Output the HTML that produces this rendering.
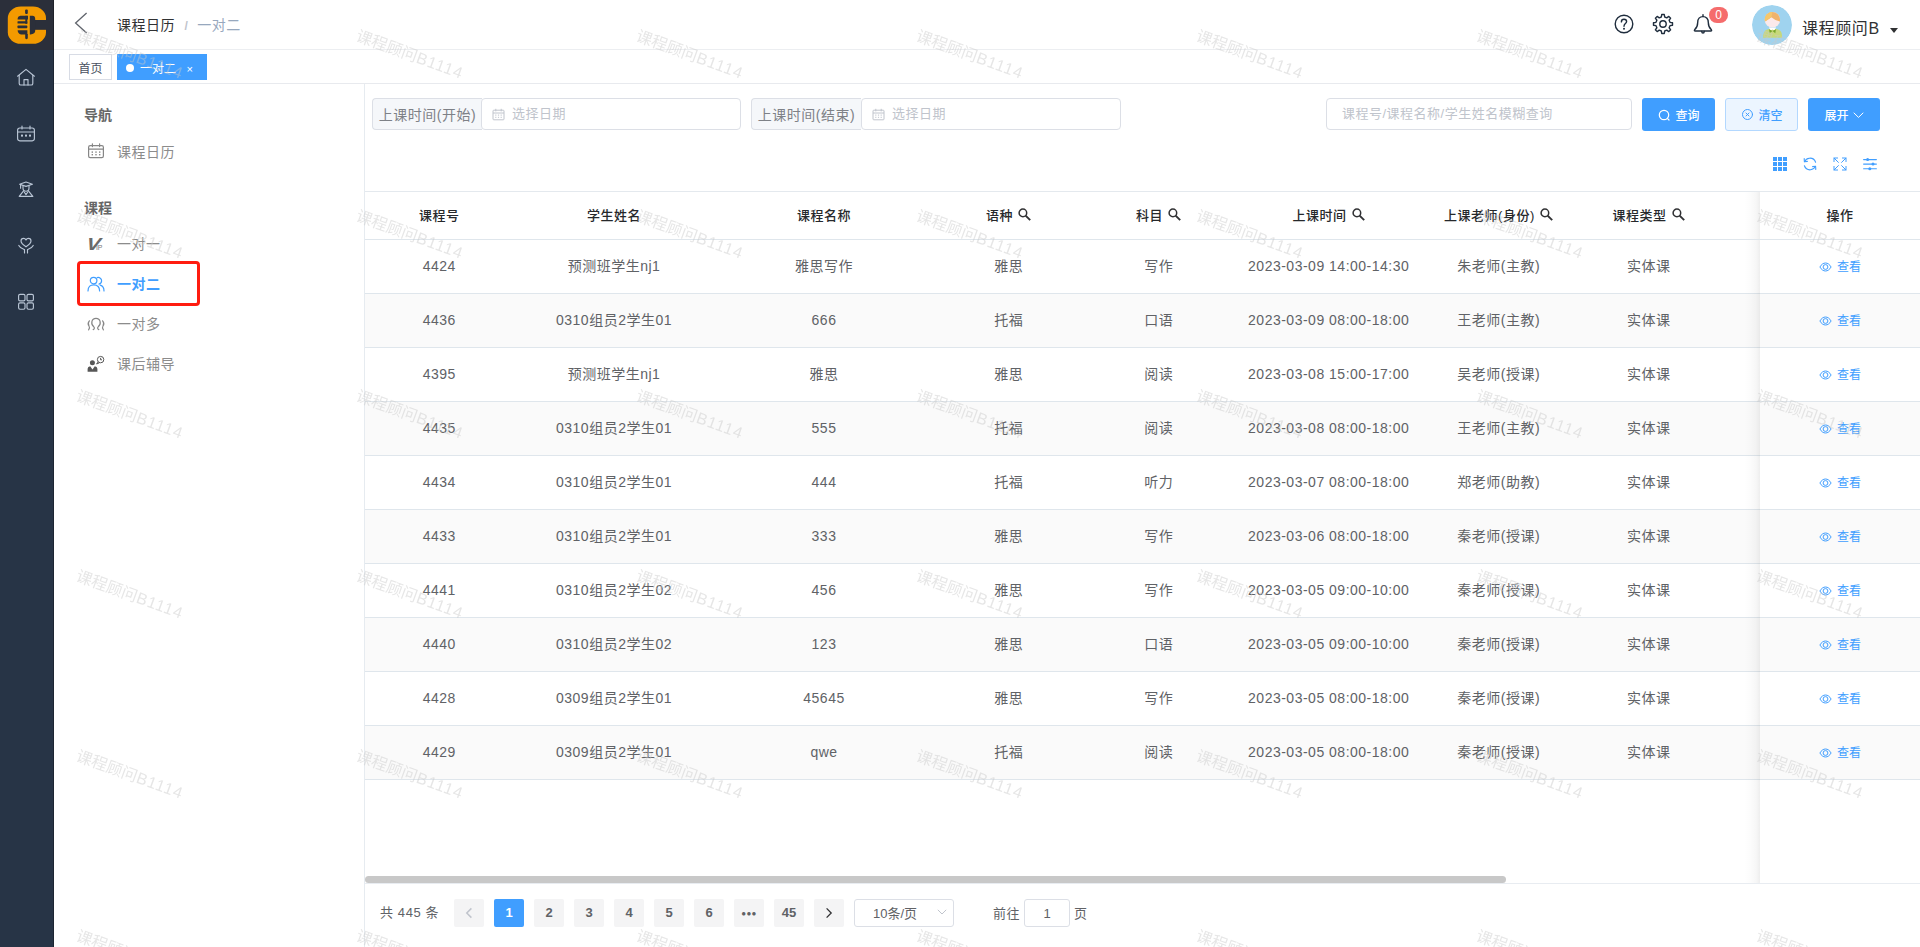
<!DOCTYPE html>
<html lang="zh-CN">
<head>
<meta charset="utf-8">
<title>一对二</title>
<style>
*{box-sizing:border-box;margin:0;padding:0}
html,body{width:1920px;height:947px;overflow:hidden;background:#fff}
body{position:relative;font-family:"Liberation Sans","Noto Sans CJK SC",sans-serif;font-size:14px;color:#606266;letter-spacing:.5px}
svg{display:block}
.side{position:absolute;left:0;top:0;width:54px;height:947px;background:#273446;box-shadow:inset -1px 0 0 rgba(0,0,0,.28)}
.logo{position:absolute;left:0;top:0;width:54px;height:50px;background:#2b2f3a;box-shadow:inset -1px 0 0 rgba(0,0,0,.28)}
.logo svg{position:absolute;left:7px;top:5px}
.sic{position:absolute;left:14px;width:24px;height:24px}
.navbar{position:absolute;left:54px;top:0;width:1866px;height:50px;background:#fff;border-bottom:1px solid #eceef1}
.back{position:absolute;left:20px;top:12px}
.bc{position:absolute;left:63px;top:0;height:50px;line-height:50px;font-size:14px;letter-spacing:.5px;white-space:nowrap}
.bc .b1{color:#303133}
.bc .sep{color:#c0c4cc;margin:0 9px 0 9.5px;font-weight:bold;font-size:12px}
.bc .b2{color:#97a8be}
.hi{position:absolute;top:13px;width:22px;height:22px}
.badge{position:absolute;left:1655px;top:7px;width:19px;height:16px;border-radius:8px;background:#f56c6c;color:#fff;font-size:12px;line-height:16px;text-align:center;letter-spacing:0}
.avatar{position:absolute;left:1698px;top:5px;width:40px;height:40px;border-radius:50%;overflow:hidden}
.uname{position:absolute;left:1748px;top:4px;height:50px;line-height:50px;font-size:16px;color:#303133;letter-spacing:.6px;white-space:nowrap}
.caret{position:absolute;left:1836px;top:28px;width:0;height:0;border:4px solid transparent;border-top:5px solid #303133;border-bottom:0}
.tags{position:absolute;left:54px;top:50px;width:1866px;height:34px;background:#fff;border-bottom:1px solid #e8eaee}
.tag{position:absolute;top:4px;height:26px;line-height:28px;font-size:12px;letter-spacing:0;border:1px solid #d8dce5;color:#495060;background:#fff;white-space:nowrap}
.tag.t1{left:15px;width:43px;text-align:center}
.tag.t2{left:63px;width:90px;background:#409eff;border-color:#409eff;color:#fff}
.tag .dot{position:absolute;left:8px;top:9px;width:8px;height:8px;border-radius:50%;background:#fff}
.tag b{position:absolute;left:22px;top:0;font-weight:normal}
.tag em{position:absolute;left:68.5px;top:0;font-style:normal;font-size:11px}
.lnav{position:absolute;left:54px;top:84px;width:310px;height:863px;background:#fff}
.lt{position:absolute;left:30px;height:20px;line-height:20px;font-size:14px;font-weight:bold;color:#666;letter-spacing:0;top:0;margin-top:-84px}
.li{position:absolute;left:63px;height:20px;line-height:20px;font-size:14px;color:#8c8c8c;letter-spacing:.5px;margin-top:-84px;white-space:nowrap}
.li .ic{position:absolute;left:-31px;top:0;width:20px;height:20px}
.li.act{color:#409eff;font-weight:bold}
.redbox{position:absolute;left:23px;top:177px;width:123px;height:45px;border:3px solid #ff1c10;border-radius:4px}
.vline{position:absolute;left:364px;top:84px;width:1px;height:863px;background:#e6ebf0}
.flabel{position:absolute;top:98px;width:110px;height:32px;line-height:32px;background:#f5f7fa;border:1px solid #dcdfe6;border-right:0;border-radius:4px 0 0 4px;color:#7e8187;font-size:14px;text-align:center;white-space:nowrap}
.finput{position:absolute;top:98px;height:32px;border:1px solid #dcdfe6;border-radius:4px;background:#fff;line-height:30px;font-size:13px;color:#c0c4cc;white-space:nowrap}
.finput svg{position:absolute;left:10px;top:8.5px}
.finput span{position:absolute;left:30px;top:0}
.finput.s span{left:15px}
.btn{position:absolute;top:98px;height:33px;border-radius:3px;font-size:12px;line-height:36px;white-space:nowrap;letter-spacing:0;font-weight:500}
.btn.pri{background:#409eff;color:#fff}
.btn.pla{background:#ecf5ff;border:1px solid #b3d8ff;color:#409eff;line-height:34px}
.btn svg{position:absolute}
.btn span{position:absolute;top:0}
.tool{position:absolute;top:157px;width:14px;height:14px}
.table{position:absolute;left:365px;top:191px;width:1555px;height:692px;border-top:1px solid #e4e9ee;overflow:hidden}
.thead{position:absolute;left:0;top:0;width:100%;height:48px;border-bottom:1px solid #dfe6ec;background:#fff}
.th{position:absolute;top:0;width:200px;height:48px;line-height:47px;text-align:center;font-size:13px;font-weight:500;color:#26282b;white-space:nowrap;margin-left:-1px}
.th span{display:inline-block;vertical-align:top}
.th svg{display:inline-block;vertical-align:top;margin:15.5px 0 0 5.5px}
.tr{position:absolute;left:0;width:100%;height:54px;border-bottom:1px solid #dfe6ec;margin-top:-1px;background:#fff}
.tr.odd,.fr.odd{background:#fafafa}
.td{position:absolute;top:0;width:200px;height:54px;line-height:52px;text-align:center;font-size:14px;color:#606266;white-space:nowrap;margin-left:-1px}
.fixr{position:absolute;left:1760px;top:192px;width:160px;height:691px;background:#fff}
.fshadow{position:absolute;left:1744px;top:192px;width:16px;height:691px;background:linear-gradient(to right,rgba(0,0,0,0),rgba(0,0,0,.012) 40%,rgba(0,0,0,.03) 75%,rgba(0,0,0,.065))}
.fixr .th{border-bottom:1px solid #dfe6ec;width:201px}
.fr{position:absolute;left:0;width:160px;height:54px;border-bottom:1px solid #dfe6ec;margin-top:-1px;background:#fff}
.view{position:absolute;left:59px;top:0;height:54px;line-height:54px;font-size:12px;color:#409eff;letter-spacing:0;white-space:nowrap}
.view svg{position:absolute;left:0;top:21.5px}
.view span{position:absolute;left:18px;top:0}
.tbottom{position:absolute;left:365px;top:883px;width:1555px;height:1px;background:#e8ecf1}
.sbar{position:absolute;left:365px;top:876px;width:1141px;height:7px;border-radius:4px;background:#c8c8c8}
.pg{position:absolute;left:364px;top:899px;height:28px;width:900px;font-size:13px;color:#606266}
.total{position:absolute;left:16px;top:0;line-height:28px;white-space:nowrap;letter-spacing:.6px}
.pb{position:absolute;top:0;width:30px;height:28px;line-height:28px;text-align:center;background:#f4f4f5;border-radius:2px;font-weight:bold;font-size:13px;color:#606266;letter-spacing:0}
.pb.on{background:#409eff;color:#fff}
.pb svg{margin:8px auto 0}
.pb.more{letter-spacing:.3px;font-size:8px;line-height:29px}
.psel{position:absolute;left:490px;top:0;width:100px;height:28px;border:1px solid #dcdfe6;border-radius:3px;line-height:28px;font-size:13px;color:#606266;letter-spacing:0}
.psel span{position:absolute;left:18px;top:0;white-space:nowrap}
.psel svg{position:absolute;left:82px;top:9px}
.goto{position:absolute;left:629px;top:0;line-height:30px;white-space:nowrap}
.pin{position:absolute;left:660px;top:0;width:46px;height:28px;border:1px solid #dcdfe6;border-radius:3px;line-height:28px;text-align:center;letter-spacing:0}
.goto2{position:absolute;left:710px;top:0;line-height:30px}
.wm{position:absolute;left:54px;top:0;pointer-events:none}

</style>
</head>
<body>
<div class="side">
<div class="logo"><svg width="40" height="39" viewBox="0 0 40 39" ><rect x="0.8" y="1.6" width="38.2" height="37.2" rx="13" ry="11.5" fill="#f39a00"/><g fill="#2b2f3a"><rect x="28" y="15" width="12" height="9.8"/><path d="M22.8 10.8 H25.5 Q28.2 10.8 28.2 14 V26 Q28.2 28.8 23.5 29.4 H22.8 Z"/><path d="M13.5 10.8 H21 V14.4 H10.6 Q10.6 11.2 13.5 10.8Z"/><rect x="10.5" y="16.2" width="9.8" height="2.4" rx=".6"/><rect x="10.5" y="20.6" width="9.8" height="2.6" rx=".6"/><path d="M10.6 25.2 H20.4 V29.4 H14 Q10.8 28.8 10.6 25.2Z"/><rect x="18.1" y="4.6" width="2.7" height="4.4" rx="1"/><rect x="18.3" y="10.8" width="2" height="8" /><path d="M18.2 29 H20.8 V33.2 Q19.5 35.5 18.2 33.2Z"/></g></svg></div>
<div class="sic" style="top:65px"><svg width="24" height="24" viewBox="0 0 24 24" ><g fill="none" stroke="#b9c5d5" stroke-width="1.15" stroke-linecap="round" stroke-linejoin="round"><path d="M3.6 11.2 L12 4.4 L20.4 11.2"/><path d="M5.2 10.2 V18.4 Q5.2 20 6.8 20 H17.2 Q18.8 20 18.8 18.4 V10.2"/><path d="M10 20 V14.6 H14 V20"/></g></svg></div>
<div class="sic" style="top:121px"><svg width="24" height="24" viewBox="0 0 24 24" ><g fill="none" stroke="#b9c5d5" stroke-width="1.15" stroke-linecap="round" stroke-linejoin="round"><rect x="3.6" y="7" width="16.8" height="12.8" rx="2.2"/><path d="M8 5 V8 M16 5 V8 M3.8 11 H20.2"/><g fill="#b9c5d5" stroke="none"><rect x="7" y="13.6" width="2" height="2"/><rect x="11" y="13.6" width="2" height="2"/><rect x="15" y="13.6" width="2" height="2"/></g></g></svg></div>
<div class="sic" style="top:177px"><svg width="24" height="24" viewBox="0 0 24 24" ><g fill="none" stroke="#b9c5d5" stroke-width="1.15" stroke-linecap="round" stroke-linejoin="round"><path d="M5.6 7.2 L12 5 L18.4 7.2 L12 9.4 Z"/><path d="M6.6 7.8 V11.2"/><path d="M9 8.6 V11 Q9 14.2 12 14.2 Q15 14.2 15 11 V8.6"/><path d="M9.6 13.8 L5.2 19.4 H18.8 L14.4 13.8"/><path d="M10.2 15 L12 17.6 L13.8 15"/></g></svg></div>
<div class="sic" style="top:233px"><svg width="24" height="24" viewBox="0 0 24 24" ><g fill="none" stroke="#b9c5d5" stroke-width="1.15" stroke-linecap="round" stroke-linejoin="round"><path d="M12 13.8 C8.6 11.4 7 9.8 7 7.9 C7 6.2 8.3 5.3 9.6 5.3 C10.8 5.3 11.6 6 12 6.9 C12.4 6 13.2 5.3 14.4 5.3 C15.7 5.3 17 6.2 17 7.9 C17 9.8 15.4 11.4 12 13.8Z"/><path d="M4.8 12.4 C6 15 8.4 15.8 10.5 16.6 V20"/><path d="M19.2 12.4 C18 15 15.6 15.8 13.5 16.6 V20"/></g></svg></div>
<div class="sic" style="top:289px"><svg width="24" height="24" viewBox="0 0 24 24" ><g fill="none" stroke="#b9c5d5" stroke-width="1.15" stroke-linecap="round" stroke-linejoin="round"><rect x="4.6" y="5.4" width="6.4" height="6.4" rx="1.4"/><rect x="13" y="5.4" width="6.4" height="6.4" rx="1.4"/><rect x="4.6" y="13.8" width="6.4" height="6.4" rx="1.4"/><rect x="13" y="13.8" width="6.4" height="6.4" rx="1.4"/></g></svg></div>
</div>
<div class="navbar">
<div class="back"><svg width="14" height="22" viewBox="0 0 14 22" ><path d="M12.6 1 L1.6 11 L12.6 21" fill="none" stroke="#5f636b" stroke-width="1.3"/></svg></div>
<div class="bc"><span class="b1">课程日历</span><span class="sep">/</span><span class="b2">一对二</span></div>
<div class="hi" style="left:1559px"><svg width="22" height="22" viewBox="0 0 22 22" ><g fill="none" stroke="#1f2d3d" stroke-width="1.4" stroke-linecap="round"><circle cx="11" cy="11" r="8.8"/><path d="M8.4 8.9 C8.4 7.2 9.6 6.3 11 6.3 C12.5 6.3 13.6 7.2 13.6 8.6 C13.6 10.6 11 10.6 11 13.2"/></g><circle cx="11" cy="15.8" r="1" fill="#1f2d3d"/></svg></div>
<div class="hi" style="left:1598px"><svg width="22" height="22" viewBox="0 0 22 22" ><g fill="none" stroke="#1f2d3d" stroke-width="1.4" stroke-linejoin="round"><path d="M9.72 1.49 L12.28 1.49 L12.68 4.00 L14.76 4.86 L16.82 3.37 L18.63 5.18 L17.14 7.24 L18.00 9.32 L20.51 9.72 L20.51 12.28 L18.00 12.68 L17.14 14.76 L18.63 16.82 L16.82 18.63 L14.76 17.14 L12.68 18.00 L12.28 20.51 L9.72 20.51 L9.32 18.00 L7.24 17.14 L5.18 18.63 L3.37 16.82 L4.86 14.76 L4.00 12.68 L1.49 12.28 L1.49 9.72 L4.00 9.32 L4.86 7.24 L3.37 5.18 L5.18 3.37 L7.24 4.86 L9.32 4.00Z"/><circle cx="11" cy="11" r="3.2"/></g></svg></div>
<div class="hi" style="left:1638px"><svg width="22" height="22" viewBox="0 0 22 22" ><g fill="none" stroke="#1f2d3d" stroke-width="1.4" stroke-linecap="round" stroke-linejoin="round"><path d="M11 1.8 V3.4"/><path d="M11 3.6 C7.6 3.6 5.7 6.2 5.7 9.4 C5.7 13 4.8 14.8 2.6 16.8 C2.2 17.4 2.4 18 3.2 18 H18.8 C19.6 18 19.8 17.4 19.4 16.8 C17.2 14.8 16.3 13 16.3 9.4 C16.3 6.2 14.4 3.6 11 3.6Z"/><path d="M9.7 18.4 C9.8 19.6 10.3 20.1 11 20.1 C11.7 20.1 12.2 19.6 12.3 18.4"/></g></svg></div>
<div class="badge">0</div>
<div class="avatar"><svg width="40" height="40" viewBox="0 0 40 40" ><defs><clipPath id="avh"><circle cx="20.4" cy="14.8" r="7.7"/></clipPath></defs><circle cx="20" cy="20" r="20" fill="#9fd3ef"/><path d="M11 32.8 V30.4 Q11.4 23.4 20.5 23.4 Q29.6 23.4 30 30.4 V32.8Z" fill="#c6d87b"/><path d="M16.8 22.6 H24.2 L22.4 25.6 L20.5 24.4 L18.6 25.6Z" fill="#fff"/><path d="M17.1 24.2 L20.4 26.1 L17.7 28.2Z M23.9 24.2 L20.6 26.1 L23.3 28.2Z" fill="#78a62a"/><circle cx="20.4" cy="14.8" r="7.7" fill="#fbe9ea"/><g clip-path="url(#avh)"><path d="M12 17 Q14.6 15.6 19.4 12.2 Q23 15.6 29 16.6 V6 H12Z" fill="#f0b36b"/><path d="M12 17 Q14.6 15.6 19.4 12.2 L20.6 6 H12Z" fill="#f6c76b"/></g></svg></div>
<div class="uname">课程顾问B</div><div class="caret"></div>
</div>
<div class="tags">
<span class="tag t1">首页</span>
<span class="tag t2"><i class="dot"></i><b>一对二</b><em>×</em></span>
</div>
<div class="lnav">
<div class="lt" style="top:105px">导航</div>
<div class="li" style="top:142px"><span class="ic"><svg width="20" height="20" viewBox="0 0 20 20" ><g fill="none" stroke="#868686" stroke-width="1.2" stroke-linecap="round" stroke-linejoin="round"><rect x="2.6" y="3.6" width="14.8" height="12" rx="1.6"/><path d="M6.4 1.8 V4.6 M13.6 1.8 V4.6 M2.8 7.2 H17.2"/><g stroke="none" fill="#868686"><rect x="5.6" y="9.4" width="1.4" height="1.4"/><rect x="9.3" y="9.4" width="1.4" height="1.4"/><rect x="13" y="9.4" width="1.4" height="1.4"/><rect x="5.6" y="12" width="1.4" height="1.4"/><rect x="9.3" y="12" width="1.4" height="1.4"/><rect x="13" y="12" width="1.4" height="1.4"/></g></g></svg></span>课程日历</div>
<div class="lt" style="top:198px">课程</div>
<div class="li" style="top:234px"><span class="ic"><svg width="20" height="20" viewBox="0 0 20 20" ><text x="0" y="0" transform="translate(-0.2,16.3) skewX(-8) scale(1.2,1)" font-family="Liberation Sans, sans-serif" font-size="17.5" font-weight="bold" font-style="italic" fill="#6a6a6a" letter-spacing="0">V</text><text x="10" y="16.1" font-family="Liberation Sans, sans-serif" font-size="7" fill="#777" letter-spacing="-0.2">IP</text></svg></span>一对一</div>
<div class="redbox"></div>
<div class="li act" style="top:274px"><span class="ic"><svg width="20" height="20" viewBox="0 0 20 20" ><g fill="none" stroke="#409eff" stroke-width="1.2" stroke-linecap="round" stroke-linejoin="round"><circle cx="7.6" cy="6.6" r="3.3"/><path d="M2 17 C2 12.4 4.6 10.8 7.7 10.8 C10.8 10.8 13.6 12.4 13.6 17"/><path d="M11.2 3.6 C13.6 3 15.6 4.6 15.6 6.8 C15.6 8.6 14.4 9.8 13 10.2"/><path d="M14.2 11.2 C16.6 11.8 18 14 18 17"/></g></svg></span>一对二</div>
<div class="li" style="top:314px"><span class="ic"><svg width="20" height="20" viewBox="0 0 20 20" ><g fill="none" stroke="#868686" stroke-width="1.2" stroke-linecap="round" stroke-linejoin="round"><path d="M7.2 15.6 C8.4 15.2 8.8 13.8 7.8 12.8 C4.4 10 5.4 4.4 10 4.4 C14.6 4.4 15.6 10 12.2 12.8 C11.2 13.8 11.6 15.2 12.8 15.6"/><path d="M3.4 6.8 C1.6 8.8 2 10.6 3 12 C3.8 13.2 3.6 14.6 2.6 15.8"/><path d="M16.6 6.8 C18.4 8.8 18 10.6 17 12 C16.2 13.2 16.4 14.6 17.4 15.8"/></g></svg></span>一对多</div>
<div class="li" style="top:354px"><span class="ic"><svg width="20" height="20" viewBox="0 0 20 20" ><g fill="#575757"><circle cx="6.4" cy="8.8" r="2.5"/><path d="M1.6 17.8 V14.8 Q1.8 12.6 4.2 12.2 L6.5 15.6 L8.8 12.2 Q11.2 12.6 11.4 14.8 V17.8Z"/></g><g fill="none" stroke="#575757" stroke-width="1"><circle cx="14.6" cy="5.6" r="3.2"/><path d="M14.6 3.9 V5.8 H16" /><path d="M12.2 7.9 L10.6 10 L13.4 8.8"/></g></svg></span>课后辅导</div>
</div>
<div class="vline"></div>
<div class="flabel" style="left:372px">上课时间(开始)</div>
<div class="finput" style="left:481px;width:260px"><svg width="13" height="13" viewBox="0 0 13 13" ><g fill="none" stroke="#c0c4cc" stroke-width="1"><rect x="1" y="2.2" width="11" height="9.6" rx=".8"/><path d="M3.8 .8 V3.4 M9.2 .8 V3.4 M1 5 H12"/></g><g fill="#c0c4cc"><rect x="3.2" y="6.6" width="1.2" height="1"/><rect x="5.9" y="6.6" width="1.2" height="1"/><rect x="8.6" y="6.6" width="1.2" height="1"/><rect x="3.2" y="8.8" width="1.2" height="1"/><rect x="5.9" y="8.8" width="1.2" height="1"/><rect x="8.6" y="8.8" width="1.2" height="1"/></g></svg><span>选择日期</span></div>
<div class="flabel" style="left:751px">上课时间(结束)</div>
<div class="finput" style="left:861px;width:260px"><svg width="13" height="13" viewBox="0 0 13 13" ><g fill="none" stroke="#c0c4cc" stroke-width="1"><rect x="1" y="2.2" width="11" height="9.6" rx=".8"/><path d="M3.8 .8 V3.4 M9.2 .8 V3.4 M1 5 H12"/></g><g fill="#c0c4cc"><rect x="3.2" y="6.6" width="1.2" height="1"/><rect x="5.9" y="6.6" width="1.2" height="1"/><rect x="8.6" y="6.6" width="1.2" height="1"/><rect x="3.2" y="8.8" width="1.2" height="1"/><rect x="5.9" y="8.8" width="1.2" height="1"/><rect x="8.6" y="8.8" width="1.2" height="1"/></g></svg><span>选择日期</span></div>
<div class="finput s" style="left:1326px;width:306px"><span>课程号/课程名称/学生姓名模糊查询</span></div>
<div class="btn pri" style="left:1642px;width:73px"><svg width="13" height="13" viewBox="0 0 13 13" style="left:16px;top:10.5px"><g fill="none" stroke="#fff" stroke-width="1.2" stroke-linecap="round"><circle cx="6" cy="6" r="4.7"/><path d="M9.6 9.6 L11 11"/></g></svg><span style="left:33.5px">查询</span></div>
<div class="btn pla" style="left:1725px;width:73px"><svg width="13" height="13" viewBox="0 0 13 13" style="left:14.8px;top:9px"><g fill="none" stroke="#409eff" stroke-width="1" stroke-linecap="round"><circle cx="6.5" cy="6.5" r="5"/><path d="M5 5 L8 8 M8 5 L5 8"/></g></svg><span style="left:32.5px">清空</span></div>
<div class="btn pri" style="left:1808px;width:72px"><span style="left:16.5px">展开</span><svg width="11" height="7" viewBox="0 0 11 7" style="left:44.8px;top:13.5px"><path d="M1 1 L5.5 5.4 L10 1" fill="none" stroke="#fff" stroke-width="1" stroke-linecap="round" stroke-linejoin="round"/></svg></div>
<div class="tool" style="left:1773px"><svg width="14" height="14" viewBox="0 0 14 14" ><g fill="#409eff"><rect x="0" y="0" width="4" height="4"/><rect x="0" y="5" width="4" height="4"/><rect x="0" y="10" width="4" height="4"/><rect x="5" y="0" width="4" height="4"/><rect x="5" y="5" width="4" height="4"/><rect x="5" y="10" width="4" height="4"/><rect x="10" y="0" width="4" height="4"/><rect x="10" y="5" width="4" height="4"/><rect x="10" y="10" width="4" height="4"/></g></svg></div>
<div class="tool" style="left:1803px"><svg width="14" height="14" viewBox="0 0 14 14" ><g transform="translate(14,0) scale(-1,1)" fill="none" stroke="#409eff" stroke-width="1.1" stroke-linecap="round" stroke-linejoin="round"><path d="M1.4 5.2 C2.4 2.4 5 1 7.6 1.2 C9.8 1.4 11.6 2.8 12.4 4.6"/><path d="M12.8 1.6 L12.6 4.8 L9.6 4.4"/><path d="M12.6 8.8 C11.6 11.6 9 13 6.4 12.8 C4.2 12.6 2.4 11.2 1.6 9.4"/><path d="M1.2 12.4 L1.4 9.2 L4.4 9.6"/></g></svg></div>
<div class="tool" style="left:1833px"><svg width="14" height="14" viewBox="0 0 14 14" ><g fill="none" stroke="#409eff" stroke-width="1" stroke-linecap="round" stroke-linejoin="round"><path d="M1 4.6 V1 H4.6 M1 1 L5.4 5.4"/><path d="M9.4 1 H13 V4.6 M13 1 L8.6 5.4"/><path d="M1 9.4 V13 H4.6 M1 13 L5.4 8.6"/><path d="M9.4 13 H13 V9.4 M13 13 L8.6 8.6"/></g></svg></div>
<div class="tool" style="left:1863px"><svg width="14" height="14" viewBox="0 0 14 14" ><g fill="none" stroke="#409eff" stroke-width="1.1" stroke-linecap="round"><path d="M.6 2.6 H13.4 M.6 7.1 H13.4 M.6 11.8 H13.4"/></g><g fill="#409eff"><circle cx="4.6" cy="2.6" r="1.5"/><circle cx="10" cy="7.1" r="1.5"/><circle cx="6.8" cy="11.8" r="1.5"/></g></svg></div>
<div class="table">
<div class="thead">
<div class="th" style="left:-24.7px"><span>课程号</span></div>
<div class="th" style="left:150.0px"><span>学生姓名</span></div>
<div class="th" style="left:360.0px"><span>课程名称</span></div>
<div class="th" style="left:544.7px"><span>语种</span><svg width="13" height="13" viewBox="0 0 13 13" ><g fill="none" stroke="#303133" stroke-linecap="butt"><circle cx="4.9" cy="4.9" r="3.8" stroke-width="1.5"/><path d="M7.6 7.6 L12.2 12.2" stroke-width="1.9"/></g></svg></div>
<div class="th" style="left:694.7px"><span>科目</span><svg width="13" height="13" viewBox="0 0 13 13" ><g fill="none" stroke="#303133" stroke-linecap="butt"><circle cx="4.9" cy="4.9" r="3.8" stroke-width="1.5"/><path d="M7.6 7.6 L12.2 12.2" stroke-width="1.9"/></g></svg></div>
<div class="th" style="left:864.7px"><span>上课时间</span><svg width="13" height="13" viewBox="0 0 13 13" ><g fill="none" stroke="#303133" stroke-linecap="butt"><circle cx="4.9" cy="4.9" r="3.8" stroke-width="1.5"/><path d="M7.6 7.6 L12.2 12.2" stroke-width="1.9"/></g></svg></div>
<div class="th" style="left:1034.7px"><span>上课老师(身份)</span><svg width="13" height="13" viewBox="0 0 13 13" ><g fill="none" stroke="#303133" stroke-linecap="butt"><circle cx="4.9" cy="4.9" r="3.8" stroke-width="1.5"/><path d="M7.6 7.6 L12.2 12.2" stroke-width="1.9"/></g></svg></div>
<div class="th" style="left:1184.7px"><span>课程类型</span><svg width="13" height="13" viewBox="0 0 13 13" ><g fill="none" stroke="#303133" stroke-linecap="butt"><circle cx="4.9" cy="4.9" r="3.8" stroke-width="1.5"/><path d="M7.6 7.6 L12.2 12.2" stroke-width="1.9"/></g></svg></div>
</div>
<div class="tr" style="top:49px">
<div class="td" style="left:-24.7px">4424</div>
<div class="td" style="left:150.0px">预测班学生nj1</div>
<div class="td" style="left:360.0px">雅思写作</div>
<div class="td" style="left:544.7px">雅思</div>
<div class="td" style="left:694.7px">写作</div>
<div class="td" style="left:864.7px">2023-03-09 14:00-14:30</div>
<div class="td" style="left:1034.7px">朱老师(主教)</div>
<div class="td" style="left:1184.7px">实体课</div>
</div>
<div class="tr odd" style="top:103px">
<div class="td" style="left:-24.7px">4436</div>
<div class="td" style="left:150.0px">0310组员2学生01</div>
<div class="td" style="left:360.0px">666</div>
<div class="td" style="left:544.7px">托福</div>
<div class="td" style="left:694.7px">口语</div>
<div class="td" style="left:864.7px">2023-03-09 08:00-18:00</div>
<div class="td" style="left:1034.7px">王老师(主教)</div>
<div class="td" style="left:1184.7px">实体课</div>
</div>
<div class="tr" style="top:157px">
<div class="td" style="left:-24.7px">4395</div>
<div class="td" style="left:150.0px">预测班学生nj1</div>
<div class="td" style="left:360.0px">雅思</div>
<div class="td" style="left:544.7px">雅思</div>
<div class="td" style="left:694.7px">阅读</div>
<div class="td" style="left:864.7px">2023-03-08 15:00-17:00</div>
<div class="td" style="left:1034.7px">吴老师(授课)</div>
<div class="td" style="left:1184.7px">实体课</div>
</div>
<div class="tr odd" style="top:211px">
<div class="td" style="left:-24.7px">4435</div>
<div class="td" style="left:150.0px">0310组员2学生01</div>
<div class="td" style="left:360.0px">555</div>
<div class="td" style="left:544.7px">托福</div>
<div class="td" style="left:694.7px">阅读</div>
<div class="td" style="left:864.7px">2023-03-08 08:00-18:00</div>
<div class="td" style="left:1034.7px">王老师(主教)</div>
<div class="td" style="left:1184.7px">实体课</div>
</div>
<div class="tr" style="top:265px">
<div class="td" style="left:-24.7px">4434</div>
<div class="td" style="left:150.0px">0310组员2学生01</div>
<div class="td" style="left:360.0px">444</div>
<div class="td" style="left:544.7px">托福</div>
<div class="td" style="left:694.7px">听力</div>
<div class="td" style="left:864.7px">2023-03-07 08:00-18:00</div>
<div class="td" style="left:1034.7px">郑老师(助教)</div>
<div class="td" style="left:1184.7px">实体课</div>
</div>
<div class="tr odd" style="top:319px">
<div class="td" style="left:-24.7px">4433</div>
<div class="td" style="left:150.0px">0310组员2学生01</div>
<div class="td" style="left:360.0px">333</div>
<div class="td" style="left:544.7px">雅思</div>
<div class="td" style="left:694.7px">写作</div>
<div class="td" style="left:864.7px">2023-03-06 08:00-18:00</div>
<div class="td" style="left:1034.7px">秦老师(授课)</div>
<div class="td" style="left:1184.7px">实体课</div>
</div>
<div class="tr" style="top:373px">
<div class="td" style="left:-24.7px">4441</div>
<div class="td" style="left:150.0px">0310组员2学生02</div>
<div class="td" style="left:360.0px">456</div>
<div class="td" style="left:544.7px">雅思</div>
<div class="td" style="left:694.7px">写作</div>
<div class="td" style="left:864.7px">2023-03-05 09:00-10:00</div>
<div class="td" style="left:1034.7px">秦老师(授课)</div>
<div class="td" style="left:1184.7px">实体课</div>
</div>
<div class="tr odd" style="top:427px">
<div class="td" style="left:-24.7px">4440</div>
<div class="td" style="left:150.0px">0310组员2学生02</div>
<div class="td" style="left:360.0px">123</div>
<div class="td" style="left:544.7px">雅思</div>
<div class="td" style="left:694.7px">口语</div>
<div class="td" style="left:864.7px">2023-03-05 09:00-10:00</div>
<div class="td" style="left:1034.7px">秦老师(授课)</div>
<div class="td" style="left:1184.7px">实体课</div>
</div>
<div class="tr" style="top:481px">
<div class="td" style="left:-24.7px">4428</div>
<div class="td" style="left:150.0px">0309组员2学生01</div>
<div class="td" style="left:360.0px">45645</div>
<div class="td" style="left:544.7px">雅思</div>
<div class="td" style="left:694.7px">写作</div>
<div class="td" style="left:864.7px">2023-03-05 08:00-18:00</div>
<div class="td" style="left:1034.7px">秦老师(授课)</div>
<div class="td" style="left:1184.7px">实体课</div>
</div>
<div class="tr odd" style="top:535px">
<div class="td" style="left:-24.7px">4429</div>
<div class="td" style="left:150.0px">0309组员2学生01</div>
<div class="td" style="left:360.0px">qwe</div>
<div class="td" style="left:544.7px">托福</div>
<div class="td" style="left:694.7px">阅读</div>
<div class="td" style="left:864.7px">2023-03-05 08:00-18:00</div>
<div class="td" style="left:1034.7px">秦老师(授课)</div>
<div class="td" style="left:1184.7px">实体课</div>
</div>
</div>
<div class="fshadow"></div>
<div class="fixr">
<div class="th" style="left:-19.5px"><span>操作</span></div>
<div class="fr" style="top:49px"><div class="view"><svg width="13" height="10" viewBox="0 0 13 10" ><g fill="none" stroke="#409eff" stroke-width="1"><path d="M.9 5 C2.4 2.4 4.3 1 6.5 1 C8.7 1 10.6 2.4 12.1 5 C10.6 7.6 8.7 9 6.5 9 C4.3 9 2.4 7.6 .9 5Z"/><circle cx="6.5" cy="5" r="2.4"/></g></svg><span>查看</span></div></div>
<div class="fr odd" style="top:103px"><div class="view"><svg width="13" height="10" viewBox="0 0 13 10" ><g fill="none" stroke="#409eff" stroke-width="1"><path d="M.9 5 C2.4 2.4 4.3 1 6.5 1 C8.7 1 10.6 2.4 12.1 5 C10.6 7.6 8.7 9 6.5 9 C4.3 9 2.4 7.6 .9 5Z"/><circle cx="6.5" cy="5" r="2.4"/></g></svg><span>查看</span></div></div>
<div class="fr" style="top:157px"><div class="view"><svg width="13" height="10" viewBox="0 0 13 10" ><g fill="none" stroke="#409eff" stroke-width="1"><path d="M.9 5 C2.4 2.4 4.3 1 6.5 1 C8.7 1 10.6 2.4 12.1 5 C10.6 7.6 8.7 9 6.5 9 C4.3 9 2.4 7.6 .9 5Z"/><circle cx="6.5" cy="5" r="2.4"/></g></svg><span>查看</span></div></div>
<div class="fr odd" style="top:211px"><div class="view"><svg width="13" height="10" viewBox="0 0 13 10" ><g fill="none" stroke="#409eff" stroke-width="1"><path d="M.9 5 C2.4 2.4 4.3 1 6.5 1 C8.7 1 10.6 2.4 12.1 5 C10.6 7.6 8.7 9 6.5 9 C4.3 9 2.4 7.6 .9 5Z"/><circle cx="6.5" cy="5" r="2.4"/></g></svg><span>查看</span></div></div>
<div class="fr" style="top:265px"><div class="view"><svg width="13" height="10" viewBox="0 0 13 10" ><g fill="none" stroke="#409eff" stroke-width="1"><path d="M.9 5 C2.4 2.4 4.3 1 6.5 1 C8.7 1 10.6 2.4 12.1 5 C10.6 7.6 8.7 9 6.5 9 C4.3 9 2.4 7.6 .9 5Z"/><circle cx="6.5" cy="5" r="2.4"/></g></svg><span>查看</span></div></div>
<div class="fr odd" style="top:319px"><div class="view"><svg width="13" height="10" viewBox="0 0 13 10" ><g fill="none" stroke="#409eff" stroke-width="1"><path d="M.9 5 C2.4 2.4 4.3 1 6.5 1 C8.7 1 10.6 2.4 12.1 5 C10.6 7.6 8.7 9 6.5 9 C4.3 9 2.4 7.6 .9 5Z"/><circle cx="6.5" cy="5" r="2.4"/></g></svg><span>查看</span></div></div>
<div class="fr" style="top:373px"><div class="view"><svg width="13" height="10" viewBox="0 0 13 10" ><g fill="none" stroke="#409eff" stroke-width="1"><path d="M.9 5 C2.4 2.4 4.3 1 6.5 1 C8.7 1 10.6 2.4 12.1 5 C10.6 7.6 8.7 9 6.5 9 C4.3 9 2.4 7.6 .9 5Z"/><circle cx="6.5" cy="5" r="2.4"/></g></svg><span>查看</span></div></div>
<div class="fr odd" style="top:427px"><div class="view"><svg width="13" height="10" viewBox="0 0 13 10" ><g fill="none" stroke="#409eff" stroke-width="1"><path d="M.9 5 C2.4 2.4 4.3 1 6.5 1 C8.7 1 10.6 2.4 12.1 5 C10.6 7.6 8.7 9 6.5 9 C4.3 9 2.4 7.6 .9 5Z"/><circle cx="6.5" cy="5" r="2.4"/></g></svg><span>查看</span></div></div>
<div class="fr" style="top:481px"><div class="view"><svg width="13" height="10" viewBox="0 0 13 10" ><g fill="none" stroke="#409eff" stroke-width="1"><path d="M.9 5 C2.4 2.4 4.3 1 6.5 1 C8.7 1 10.6 2.4 12.1 5 C10.6 7.6 8.7 9 6.5 9 C4.3 9 2.4 7.6 .9 5Z"/><circle cx="6.5" cy="5" r="2.4"/></g></svg><span>查看</span></div></div>
<div class="fr odd" style="top:535px"><div class="view"><svg width="13" height="10" viewBox="0 0 13 10" ><g fill="none" stroke="#409eff" stroke-width="1"><path d="M.9 5 C2.4 2.4 4.3 1 6.5 1 C8.7 1 10.6 2.4 12.1 5 C10.6 7.6 8.7 9 6.5 9 C4.3 9 2.4 7.6 .9 5Z"/><circle cx="6.5" cy="5" r="2.4"/></g></svg><span>查看</span></div></div>
</div>
<div class="tbottom"></div><div class="sbar"></div>
<div class="pg">
<span class="total">共 445 条</span>
<span class="pb prev" style="left:90px"><svg width="8" height="12" viewBox="0 0 8 12" ><path d="M6.4 1.4 L1.8 6 L6.4 10.6" fill="none" stroke="#c0c4cc" stroke-width="1.5"/></svg></span>
<span class="pb on" style="left:130px">1</span>
<span class="pb " style="left:170px">2</span>
<span class="pb " style="left:210px">3</span>
<span class="pb " style="left:250px">4</span>
<span class="pb " style="left:290px">5</span>
<span class="pb " style="left:330px">6</span>
<span class="pb more" style="left:370px">●●●</span>
<span class="pb " style="left:410px">45</span>
<span class="pb next" style="left:450px"><svg width="8" height="12" viewBox="0 0 8 12" ><path d="M1.6 1.4 L6.2 6 L1.6 10.6" fill="none" stroke="#303133" stroke-width="1.3"/></svg></span>
<span class="psel"><span>10条/页</span><svg width="10" height="6" viewBox="0 0 10 6" ><path d="M.8 .8 L5 5 L9.2 .8" fill="none" stroke="#c0c4cc" stroke-width="1"/></svg></span>
<span class="goto">前往</span><span class="pin">1</span><span class="goto2">页</span>
</div>
<svg class="wm" width="1866" height="947" viewBox="0 0 1866 947"><defs><pattern id="wmp" width="280" height="180" patternUnits="userSpaceOnUse"><text x="0" y="0" transform="translate(21,40.4) rotate(20)" font-size="16" letter-spacing="0" fill="rgb(200,200,200)" fill-opacity="0.45">课程顾问<tspan letter-spacing="1">B1114</tspan></text></pattern></defs><rect width="1866" height="947" fill="url(#wmp)"/></svg>
</body>
</html>
